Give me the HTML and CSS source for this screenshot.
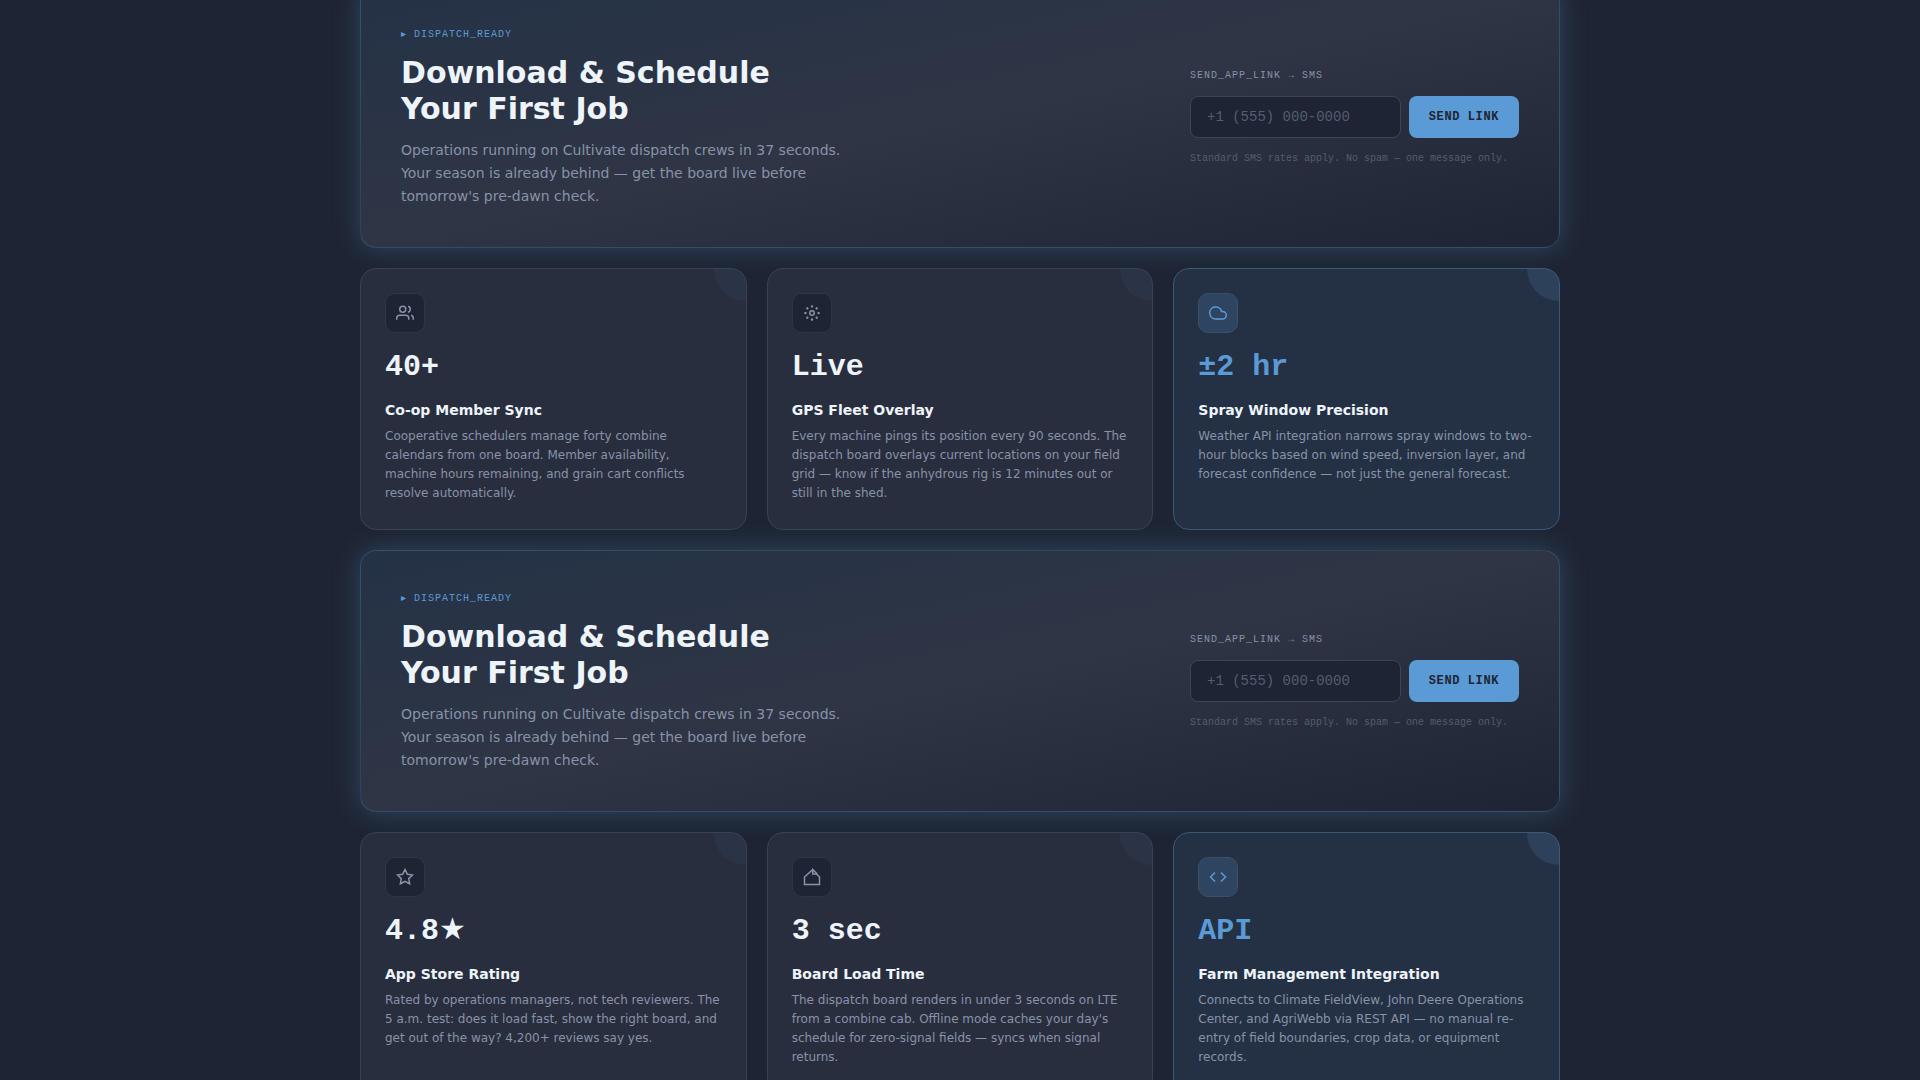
FILE: index.html
```html
<!DOCTYPE html>
<html lang="en">
<head>
  <meta charset="UTF-8">
  <meta name="viewport" content="width=device-width, initial-scale=1.0">
  <title>Cultivate</title>
  <link rel="stylesheet" href="styles.css">
</head>
<body>
  <main class="page">

    <section class="cta">
      <div class="cta-copy">
        <p class="cta-tag">▸ DISPATCH_READY</p>
        <h2>Download &amp; Schedule<br>Your First Job</h2>
        <p class="cta-text">Operations running on Cultivate dispatch crews in 37 seconds. Your season is already behind — get the board live before tomorrow's pre-dawn check.</p>
      </div>
      <form class="sms">
        <label for="phone-top">SEND_APP_LINK → SMS</label>
        <div class="sms-row">
          <input type="tel" id="phone-top" placeholder="+1 (555) 000-0000">
          <button type="submit">SEND LINK</button>
        </div>
        <p class="sms-note">Standard SMS rates apply. No spam — one message only.</p>
      </form>
    </section>

    <section class="cards">
      <article class="card">
        <div class="card-icon">
          <svg viewBox="0 0 24 24"><path d="M17 21v-2a4 4 0 0 0-4-4H5a4 4 0 0 0-4 4v2"/><circle cx="9" cy="7" r="4"/><path d="M23 21v-2a4 4 0 0 0-3-3.87M16 3.13a4 4 0 0 1 0 7.75"/></svg>
        </div>
        <div class="card-value">40+</div>
        <h3>Co-op Member Sync</h3>
        <p>Cooperative schedulers manage forty combine calendars from one board. Member availability, machine hours remaining, and grain cart conflicts resolve automatically.</p>
      </article>
      <article class="card">
        <div class="card-icon">
          <svg viewBox="0 0 24 24"><circle cx="12" cy="12" r="3"/><path stroke-width="3" stroke-linecap="round" d="M12 3v.4M12 20.6v.4M3 12h.4M20.6 12h.4M5.6 5.6l.3.3M18.1 18.1l.3.3M5.6 18.4l.3-.3M18.1 5.9l.3-.3"/></svg>
        </div>
        <div class="card-value">Live</div>
        <h3>GPS Fleet Overlay</h3>
        <p>Every machine pings its position every 90 seconds. The dispatch board overlays current locations on your field grid — know if the anhydrous rig is 12 minutes out or still in the shed.</p>
      </article>
      <article class="card card-accent">
        <div class="card-icon">
          <svg viewBox="0 0 24 24"><path d="M18 10h-1.26A8 8 0 1 0 9 20h9a5 5 0 0 0 0-10z"/></svg>
        </div>
        <div class="card-value">±2 hr</div>
        <h3>Spray Window Precision</h3>
        <p>Weather API integration narrows spray windows to two-hour blocks based on wind speed, inversion layer, and forecast confidence — not just the general forecast.</p>
      </article>
    </section>

    <section class="cta">
      <div class="cta-copy">
        <p class="cta-tag">▸ DISPATCH_READY</p>
        <h2>Download &amp; Schedule<br>Your First Job</h2>
        <p class="cta-text">Operations running on Cultivate dispatch crews in 37 seconds. Your season is already behind — get the board live before tomorrow's pre-dawn check.</p>
      </div>
      <form class="sms">
        <label for="phone">SEND_APP_LINK → SMS</label>
        <div class="sms-row">
          <input type="tel" id="phone" placeholder="+1 (555) 000-0000">
          <button type="submit">SEND LINK</button>
        </div>
        <p class="sms-note">Standard SMS rates apply. No spam — one message only.</p>
      </form>
    </section>

    <section class="cards">
      <article class="card">
        <div class="card-icon">
          <svg viewBox="0 0 24 24"><path d="M12 2l3.09 6.26L22 9.27l-5 4.87 1.18 6.88L12 17.77l-6.18 3.25L7 14.14 2 9.27l6.91-1.01L12 2z"/></svg>
        </div>
        <div class="card-value">4.8★</div>
        <h3>App Store Rating</h3>
        <p>Rated by operations managers, not tech reviewers. The 5 a.m. test: does it load fast, show the right board, and get out of the way? 4,200+ reviews say yes.</p>
      </article>
      <article class="card">
        <div class="card-icon">
          <svg viewBox="0 0 24 24"><path d="M13 2L2 12v10h20V12l-4-4h-5V2l6 6"/></svg>
        </div>
        <div class="card-value">3 sec</div>
        <h3>Board Load Time</h3>
        <p>The dispatch board renders in under 3 seconds on LTE from a combine cab. Offline mode caches your day's schedule for zero-signal fields — syncs when signal returns.</p>
      </article>
      <article class="card card-accent">
        <div class="card-icon">
          <svg viewBox="0 0 24 24"><path d="M16 18l6-6-6-6M8 6l-6 6 6 6"/></svg>
        </div>
        <div class="card-value">API</div>
        <h3>Farm Management Integration</h3>
        <p>Connects to Climate FieldView, John Deere Operations Center, and AgriWebb via REST API — no manual re-entry of field boundaries, crop data, or equipment records.</p>
      </article>
    </section>

  </main>
</body>
</html>
```
FILE: styles.css
```css
:root {
  --bg: #1e2433;
  --surface: #292e3e;
  --accent: #5b9bd5;
  --accent-bg: #243044;
  --text: #eef4fc;
  --muted: #8892a8;
  --dim: #545d70;
  --mono: "Liberation Mono", "DejaVu Sans", monospace;
}

* {
  box-sizing: border-box;
  margin: 0;
  padding: 0;
}

html {
  overflow: hidden;
}

body {
  background: var(--bg);
  color: var(--text);
  font-family: "DejaVu Sans", sans-serif;
}

/* scrolled a little past the top of the first banner */
.page {
  display: flex;
  flex-direction: column;
  gap: 20px;
  max-width: 1200px;
  margin: -14px auto 0;
}

.cta {
  display: flex;
  justify-content: space-between;
  align-items: center;
  gap: 40px;
  padding: 40px 40px 39px;
  border: 1px solid rgba(91, 155, 213, 0.25);
  border-radius: 16px;
  background: linear-gradient(to bottom right, #243246, #2f3545 50%, #1e2433);
  box-shadow: 0 0 28px rgba(91, 155, 213, 0.3);
}

.cta-copy {
  max-width: 460px;
}

.cta-tag {
  margin-bottom: 12px;
  color: var(--accent);
  font: 10px/16px var(--mono);
  letter-spacing: 1px;
}

.cta h2 {
  margin-bottom: 12px;
  font-size: 30px;
  line-height: 36px;
}

.cta-text {
  color: var(--muted);
  font-size: 14px;
  line-height: 23px;
}

.sms {
  width: 329px;
}

.sms label {
  display: block;
  margin-bottom: 13px;
  color: var(--muted);
  font: 10px/14px var(--mono);
  letter-spacing: 1px;
}

.sms-row {
  display: flex;
  gap: 8px;
  margin-bottom: 13px;
}

.sms input {
  flex: 1;
  min-width: 0;
  height: 42px;
  padding: 0 16px;
  border: 1px solid #3d4456;
  border-radius: 8px;
  background: var(--bg);
  color: var(--text);
  font: 14px var(--mono);
}

.sms input::placeholder {
  color: var(--dim);
}

.sms button {
  padding: 0 20px;
  border: none;
  border-radius: 8px;
  background: var(--accent);
  color: var(--bg);
  font: bold 12px var(--mono);
  letter-spacing: 0.05em;
  cursor: pointer;
}

.sms-note {
  color: var(--dim);
  font: 10px/16px var(--mono);
}

.cards {
  display: grid;
  grid-template-columns: repeat(3, 1fr);
  gap: 20px;
}

.card {
  position: relative;
  overflow: hidden;
  padding: 24px 24px 26px;
  border: 1px solid #3a4153;
  border-radius: 16px;
  background: var(--surface);
}

.card::after {
  content: "";
  position: absolute;
  top: 0;
  right: 0;
  width: 32px;
  height: 32px;
  border-radius: 0 0 0 32px;
  background: rgba(91, 155, 213, 0.06);
}

.card-icon {
  display: flex;
  align-items: center;
  justify-content: center;
  width: 40px;
  height: 40px;
  margin-bottom: 16px;
  border: 1px solid #2f3546;
  border-radius: 10px;
  background: var(--bg);
  color: var(--muted);
}

.card-icon svg {
  width: 18px;
  height: 18px;
  fill: none;
  stroke: currentColor;
  stroke-width: 2;
}

.card-value {
  height: 36px;
  margin-bottom: 16px;
  font: bold 30px/36px var(--mono);
}

.card h3 {
  margin-bottom: 8px;
  font-size: 14px;
  line-height: 18px;
}

.card p {
  color: var(--muted);
  font-size: 12px;
  line-height: 19px;
}

.card-accent {
  border-color: #3b5878;
  background: var(--accent-bg);
}

.card-accent::after {
  background: rgba(91, 155, 213, 0.16);
}

.card-accent .card-icon {
  border-color: #3d4f68;
  background: #2f4460;
  color: var(--accent);
}

.card-accent .card-value {
  color: var(--accent);
}
```
